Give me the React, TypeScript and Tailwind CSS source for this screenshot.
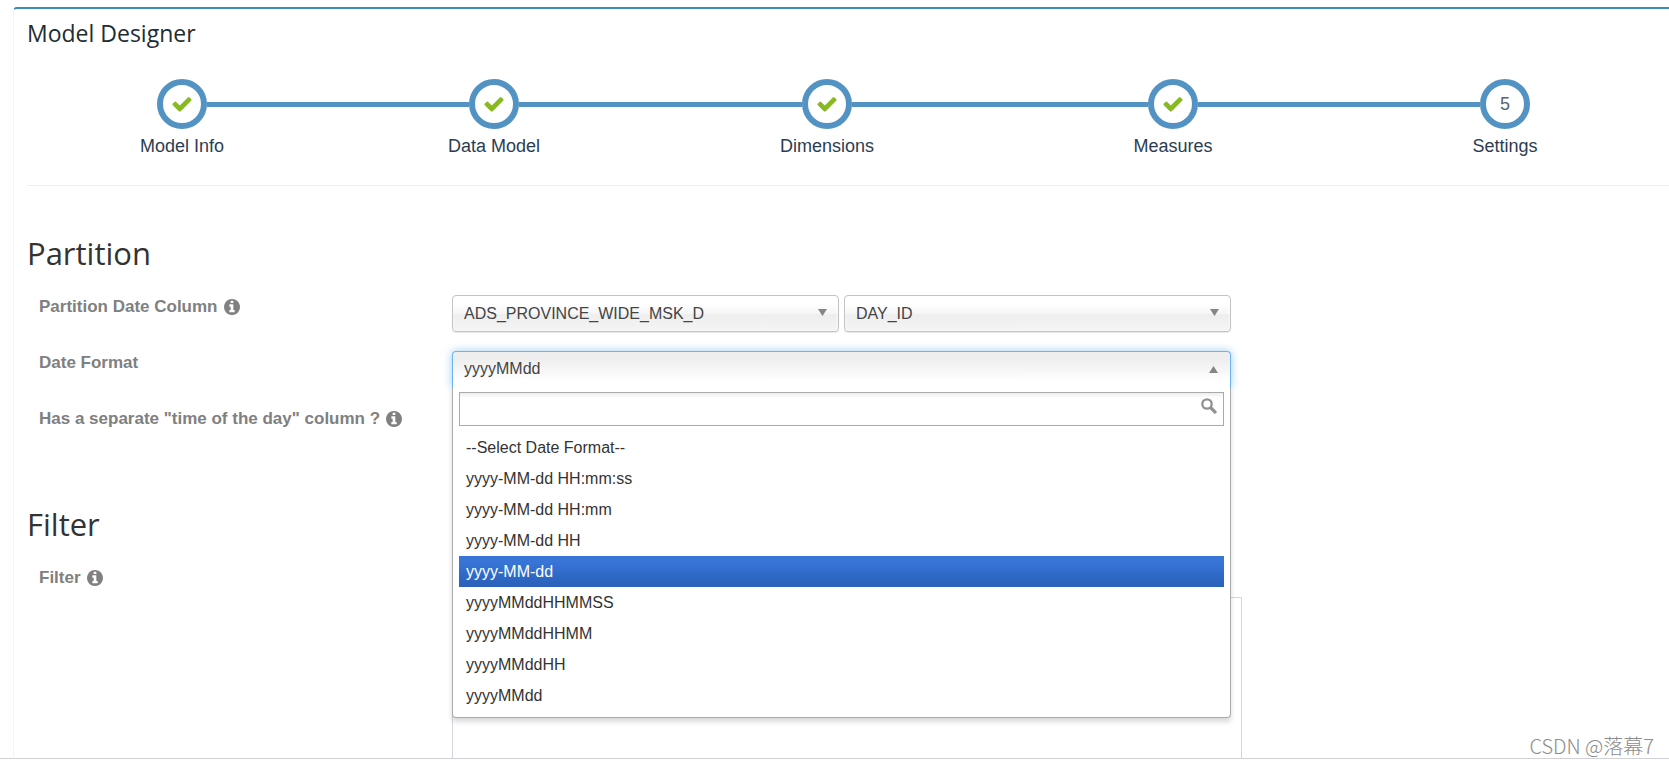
import { useState } from 'react';

const steps = ['Model Info', 'Data Model', 'Dimensions', 'Measures', 'Settings'];

const dateFormats = [
  '--Select Date Format--',
  'yyyy-MM-dd HH:mm:ss',
  'yyyy-MM-dd HH:mm',
  'yyyy-MM-dd HH',
  'yyyy-MM-dd',
  'yyyyMMddHHMMSS',
  'yyyyMMddHHMM',
  'yyyyMMddHH',
  'yyyyMMdd',
];

function CheckIcon() {
  return (
    <svg viewBox="0 0 1792 1792" className="size-[22px] fill-[#87ba21]" aria-hidden="true">
      <path d="M1671 566q0 40-28 68l-724 724-136 136q-28 28-68 28t-68-28l-136-136-362-362q-28-28-28-68t28-68l136-136q28-28 68-28t68 28l294 295 656-657q28-28 68-28t68 28l136 136q28 28 28 68z" />
    </svg>
  );
}

function InfoIcon() {
  return (
    <svg viewBox="128 128 1536 1536" className="size-4 fill-[#808080]" aria-hidden="true">
      <path d="M1152 1376v-160q0-14-9-23t-23-9h-96v-512q0-14-9-23t-23-9h-320q-14 0-23 9t-9 23v160q0 14 9 23t23 9h96v320h-96q-14 0-23 9t-9 23v160q0 14 9 23t23 9h448q14 0 23-9t9-23zm-128-896v-160q0-14-9-23t-23-9h-192q-14 0-23 9t-9 23v160q0 14 9 23t23 9h192q14 0 23-9t9-23zm640 416q0 209-103 385.500t-279.500 279.500-385.500 103-385.500-103-279.500-279.500-103-385.500 103-385.500 279.500-279.500 385.500-103 385.500 103 279.500 279.500 103 385.500z" />
    </svg>
  );
}

function SearchIcon() {
  return (
    <svg viewBox="0 0 16 16" className="size-4" fill="none" stroke="#919191" aria-hidden="true">
      <circle cx="6" cy="6" r="4.700" strokeWidth="2.300" />
      <path d="M9.500 9.500L15 15" strokeWidth="3.200" />
    </svg>
  );
}

function Arrow({ up = false }: { up?: boolean }) {
  return (
    <svg viewBox="0 0 9 7" className="h-[7px] w-[9px] fill-[#858585]" aria-hidden="true">
      <path d={up ? 'M0 7L4.500 0L9 7z' : 'M0 0H9L4.500 7z'} />
    </svg>
  );
}

function Steps() {
  return (
    <ol className="mt-[31px] grid grid-cols-[310fr_314fr_352fr_340fr_324fr] pr-0.5">
      {steps.map((step, i) => (
        <li key={step} className="flex flex-col items-center">
          <div className="flex w-full items-center">
            <span className={i === 0 ? 'h-[5px] flex-1' : 'h-[5px] flex-1 bg-[#5293c4]'} />
            <span className="flex size-[50px] items-center justify-center rounded-full border-[6px] border-[#5293c4] bg-white text-lg text-[#546474]">
              {i < 4 ? <CheckIcon /> : i + 1}
            </span>
            <span className={i === 4 ? 'h-[5px] flex-1' : 'h-[5px] flex-1 bg-[#5293c4]'} />
          </div>
          <span className="mt-[5px] text-lg leading-6 text-[#2b3d53]">{step}</span>
        </li>
      ))}
    </ol>
  );
}

function FieldLabel({ text, htmlFor, info = false }: { text: string; htmlFor?: string; info?: boolean }) {
  return (
    <label
      htmlFor={htmlFor}
      className="col-span-3 flex items-center gap-1.5 self-start pl-[18px] text-[17px] leading-6 font-bold whitespace-nowrap text-[#808080]"
    >
      {text}
      {info && <InfoIcon />}
    </label>
  );
}

function ChosenSelect({ id, value, label }: { id: string; value: string; label?: string }) {
  return (
    <div className="relative flex-1">
      <select
        id={id}
        aria-label={label}
        defaultValue={value}
        className="h-[37px] w-full appearance-none rounded border border-[#c4c4c4] bg-[linear-gradient(#fff_20%,#f6f6f6_50%,#eee_52%,#f4f4f4_100%)] pl-[11px] text-base text-[#444] shadow-[inset_0_0_3px_#fff,0_1px_1px_rgba(0,0,0,0.1)] outline-none"
      >
        <option>{value}</option>
      </select>
      <span className="pointer-events-none absolute top-3.5 right-3">
        <Arrow />
      </span>
    </div>
  );
}

function DateFormatSelect() {
  const [active, setActive] = useState('yyyy-MM-dd');
  const [search, setSearch] = useState('');

  return (
    <div className="relative h-[37px]">
      <button
        id="date-format"
        type="button"
        aria-expanded="true"
        className="flex h-[37px] w-full items-center justify-between rounded-t border border-b-0 border-[#6db3ef] bg-[linear-gradient(#eee_20%,#fff_80%)] pr-3 pb-0.5 pl-[11px] text-base text-[#444] shadow-[0_0_8px_rgba(82,168,236,0.6)]"
      >
        yyyyMMdd
        <Arrow up />
      </button>
      <div className="absolute top-9 right-0 left-0 z-10 rounded-b border border-t-0 border-[#aaa] bg-white px-1.5 pt-[5px] pb-1.5 shadow-[0_4px_5px_rgba(0,0,0,0.15)]">
        <div className="relative">
          <input
            type="text"
            aria-label="Search date format"
            value={search}
            onChange={(e) => setSearch(e.target.value)}
            className="block h-[34px] w-full border border-[#aaa] bg-[linear-gradient(#eee_1%,#fff_15%)] pr-7 pl-1.5 text-base outline-none"
          />
          <span className="pointer-events-none absolute top-1.5 right-[7px]">
            <SearchIcon />
          </span>
        </div>
        <ul role="listbox" className="mt-1.5">
          {dateFormats
            .filter((format) => format.includes(search))
            .map((format) => (
              <li
                key={format}
                role="option"
                aria-selected={format === active}
                onMouseEnter={() => setActive(format)}
                className={
                  format === active
                    ? 'bg-[linear-gradient(#3875d7_20%,#2a62bc_90%)] pl-[7px] text-base leading-[31px] text-white'
                    : 'pl-[7px] text-base leading-[31px] text-[#333]'
                }
              >
                {format}
              </li>
            ))}
        </ul>
      </div>
    </div>
  );
}

export default function App() {
  return (
    <div className="relative overflow-hidden bg-white pt-[7px] font-['Liberation_Sans',Arial,sans-serif]">
      <main className="ml-[13px] rounded-tl border-t-2 border-l border-t-[#3c8dbc] border-l-[#f4f4f4] pt-[9px]">
        <div className="ml-[13px]">
          <h1 className="font-['Open_Sans',sans-serif] text-[23px] leading-[30px] text-[#222d32]">Model Designer</h1>
          <Steps />
          <hr className="mt-[27px] border-[#eee]" />
        </div>

        <section className="ml-[7px]">
          <h2 className="mt-[47px] ml-1.5 font-['Open_Sans',sans-serif] text-[31px] leading-10 text-[#333]">Partition</h2>
          <div className="mt-[22px] grid grid-cols-12">
            <FieldLabel text="Partition Date Column" htmlFor="partition-table" info />
            <div className="col-span-6 flex gap-[5px] pr-[26px] pl-[19px]">
              <ChosenSelect id="partition-table" value="ADS_PROVINCE_WIDE_MSK_D" />
              <ChosenSelect id="partition-column" value="DAY_ID" label="Partition column" />
            </div>
          </div>
          <div className="mt-[19px] grid grid-cols-12">
            <FieldLabel text="Date Format" htmlFor="date-format" />
            <div className="col-span-6 pr-[26px] pl-[19px]">
              <DateFormatSelect />
            </div>
          </div>
          <div className="mt-[19px] grid h-[37px] grid-cols-12">
            <FieldLabel text={'Has a separate "time of the day" column ?'} info />
          </div>
        </section>

        <section className="ml-[7px]">
          <h2 className="mt-[60px] ml-1.5 font-['Open_Sans',sans-serif] text-[31px] leading-10 text-[#333]">Filter</h2>
          <div className="mt-[22px] grid grid-cols-12">
            <FieldLabel text="Filter" htmlFor="filter" info />
            <div className="col-span-6 pt-[31px] pr-[15px] pl-[19px]">
              <textarea
                id="filter"
                className="block h-[161px] w-full resize-none border border-b-0 border-[#d2d6de] outline-none"
              />
            </div>
          </div>
        </section>
      </main>
      <div className="border-t border-[#d2d2d6] pb-[5px]" />
      <span className="absolute right-[15px] bottom-1.5 font-['Noto_Sans_CJK_SC',sans-serif] text-xl leading-6 font-light text-[#8c8c8c]">
        CSDN @落幕7
      </span>
    </div>
  );
}
